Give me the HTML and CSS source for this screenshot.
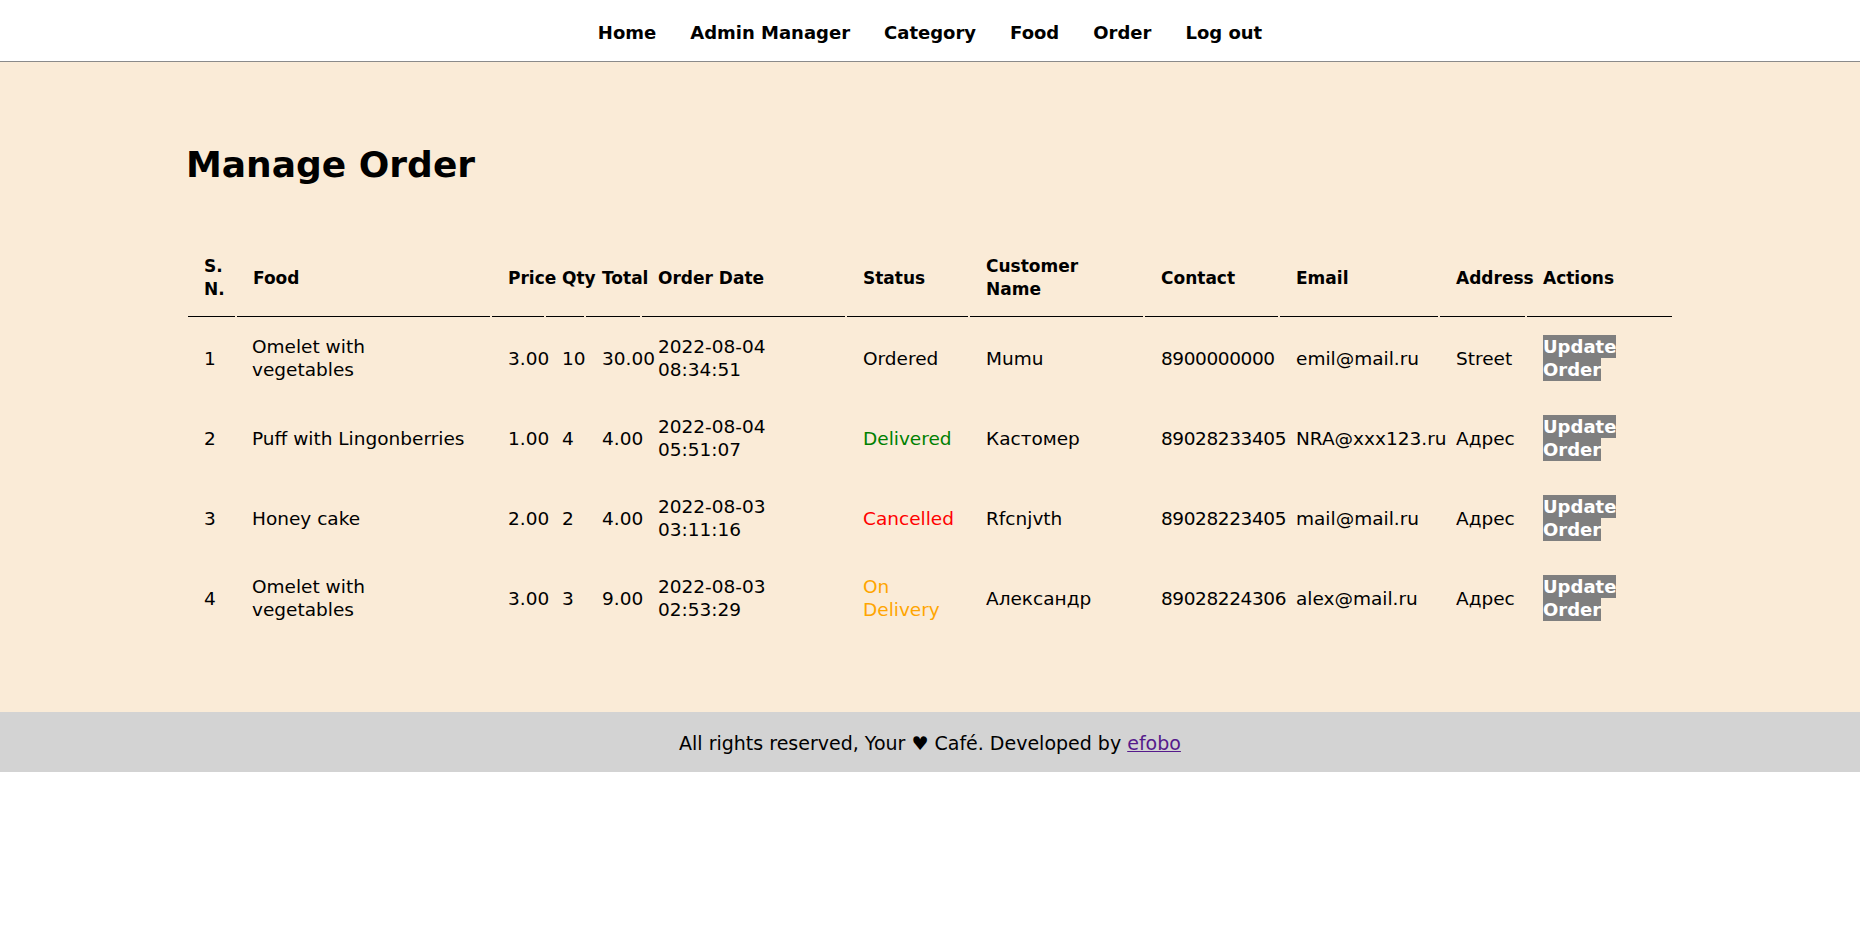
FILE: index.html
```html
<!DOCTYPE html>
<html lang="en">
<head>
<meta charset="utf-8">
<title>Manage Order</title>
<link rel="stylesheet" href="styles.css">
</head>
<body>
<header class="menu">
  <nav class="menu-links">
    <a href="#">Home</a>
    <a href="#">Admin Manager</a>
    <a href="#">Category</a>
    <a href="#">Food</a>
    <a href="#">Order</a>
    <a href="#">Log out</a>
  </nav>
</header>

<main class="main-content">
  <div class="wrapper">
    <h1>Manage Order</h1>
    <table class="tbl-full">
      <colgroup>
        <col class="c-sn"><col class="c-food"><col class="c-price"><col class="c-qty"><col class="c-total"><col class="c-date"><col class="c-status"><col class="c-name"><col class="c-contact"><col class="c-email"><col class="c-address"><col class="c-actions">
      </colgroup>
      <thead>
        <tr>
          <th>S. N.</th>
          <th>Food</th>
          <th>Price</th>
          <th>Qty</th>
          <th>Total</th>
          <th>Order Date</th>
          <th>Status</th>
          <th>Customer Name</th>
          <th>Contact</th>
          <th>Email</th>
          <th>Address</th>
          <th>Actions</th>
        </tr>
      </thead>
      <tbody>
        <tr>
          <td>1</td>
          <td class="food">Omelet with vegetables</td>
          <td>3.00</td>
          <td>10</td>
          <td>30.00</td>
          <td class="date">2022-08-04 08:34:51</td>
          <td><span class="st-ordered">Ordered</span></td>
          <td>Mumu</td>
          <td class="num">8900000000</td>
          <td>emil@mail.ru</td>
          <td>Street</td>
          <td><a href="#" class="btn-secondary">Update Order</a></td>
        </tr>
        <tr>
          <td>2</td>
          <td class="food">Puff with Lingonberries</td>
          <td>1.00</td>
          <td>4</td>
          <td>4.00</td>
          <td class="date">2022-08-04 05:51:07</td>
          <td><span class="st-delivered">Delivered</span></td>
          <td>Кастомер</td>
          <td class="num">89028233405</td>
          <td>NRA@xxx123.ru</td>
          <td>Адрес</td>
          <td><a href="#" class="btn-secondary">Update Order</a></td>
        </tr>
        <tr>
          <td>3</td>
          <td class="food">Honey cake</td>
          <td>2.00</td>
          <td>2</td>
          <td>4.00</td>
          <td class="date">2022-08-03 03:11:16</td>
          <td><span class="st-cancelled">Cancelled</span></td>
          <td>Rfcnjvth</td>
          <td class="num">89028223405</td>
          <td>mail@mail.ru</td>
          <td>Адрес</td>
          <td><a href="#" class="btn-secondary">Update Order</a></td>
        </tr>
        <tr>
          <td>4</td>
          <td class="food">Omelet with vegetables</td>
          <td>3.00</td>
          <td>3</td>
          <td>9.00</td>
          <td class="date">2022-08-03 02:53:29</td>
          <td><span class="st-ondelivery">On Delivery</span></td>
          <td>Александр</td>
          <td class="num">89028224306</td>
          <td>alex@mail.ru</td>
          <td>Адрес</td>
          <td><a href="#" class="btn-secondary">Update Order</a></td>
        </tr>
      </tbody>
    </table>
  </div>
</main>

<footer class="footer">
  <p>All rights reserved, Your &hearts; Café. Developed by <a href="#" class="dev-link">efobo</a></p>
</footer>
</body>
</html>
```

FILE: styles.css
```css
* {
  box-sizing: border-box;
}

body {
  margin: 0;
  font-family: "DejaVu Sans", "Noto Sans", sans-serif;
  color: #000;
  background: #fff;
}

/* ---------- top menu ---------- */
.menu {
  height: 62px;
  background: #fff;
  border-bottom: 1px solid #8a8a8a;
  display: flex;
  align-items: center;
  justify-content: center;
}

.menu-links {
  display: flex;
  gap: 34px;
  padding-top: 3px;
}

.menu-links a {
  color: #000;
  text-decoration: none;
  font-weight: bold;
  font-size: 18px;
}

/* ---------- main ---------- */
.main-content {
  background: #faebd7;
  padding: 81px 0 73px;
}

.wrapper {
  width: 80%;
  margin: 0 auto;
}

.wrapper h1 {
  margin: 0 0 49px;
  font-size: 36px;
  line-height: 44px;
  font-weight: bold;
}

.tbl-full {
  width: 100%;
  table-layout: fixed;
  border-collapse: separate;
  border-spacing: 2px;
}

.c-sn { width: 47px; }
.c-food { width: 253px; }
.c-price { width: 52px; }
.c-qty { width: 38px; }
.c-total { width: 54px; }
.c-date { width: 203px; }
.c-status { width: 121px; }
.c-name { width: 173px; }
.c-contact { width: 133px; }
.c-email { width: 158px; }
.c-address { width: 85px; }
.c-actions { width: 145px; }

.tbl-full th,
.tbl-full td {
  padding: 16px 16px 16px 16px;
  text-align: left;
  vertical-align: middle;
  line-height: 23px;
}

.tbl-full th {
  font-size: 17px;
  font-weight: bold;
  border-bottom: 1px solid #000;
  padding-top: 17px;
  padding-bottom: 15px;
}

.tbl-full td {
  font-size: 18.5px;
  font-weight: normal;
}

.tbl-full td.food {
  padding-left: 15px;
  padding-right: 20px;
}

.tbl-full td.num {
  letter-spacing: -0.4px;
}

.st-ordered { color: #000; }
.st-delivered { color: #008000; }
.st-cancelled { color: #ff0000; }
.st-ondelivery { color: #ffa500; }

.btn-secondary {
  background: #7f7f7f;
  color: #fff;
  font-weight: bold;
  font-size: 18px;
  text-decoration: none;
  padding: 1px 0;
}

/* ---------- footer ---------- */
.footer {
  background: #d3d3d3;
  height: 60px;
  display: flex;
  align-items: center;
  justify-content: center;
}

.footer p {
  margin: 0;
  font-size: 19px;
  line-height: 24px;
  padding-top: 2px;
}

.dev-link {
  color: #551a8b;
}
```
